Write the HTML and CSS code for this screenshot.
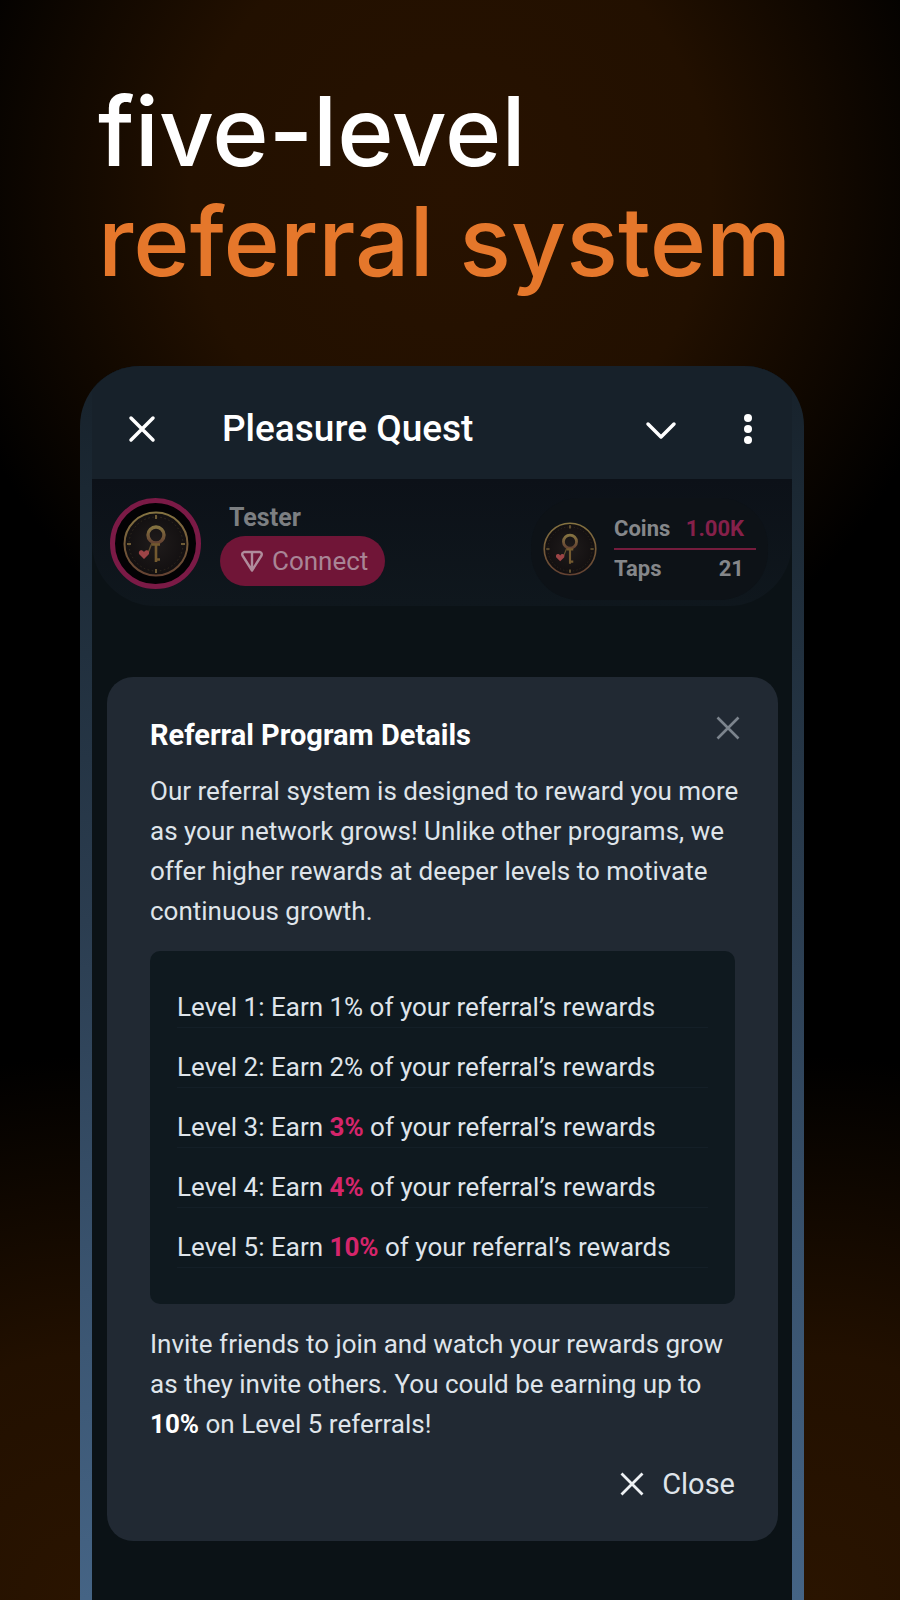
FILE: index.html
```html
<!DOCTYPE html>
<html lang="en">
<head>
<meta charset="utf-8">
<meta name="viewport" content="width=device-width, initial-scale=1">
<title>Pleasure Quest – Five-level referral system</title>
<link rel="stylesheet" href="styles.css">
</head>
<body>
<svg class="defs" aria-hidden="true">
  <defs>
    <linearGradient id="gold" x1="0" y1="0" x2="0" y2="1">
      <stop offset="0" stop-color="#857341"/>
      <stop offset="1" stop-color="#644232"/>
    </linearGradient>
    <radialGradient id="face">
      <stop offset="0" stop-color="#1f1b1b"/>
      <stop offset="1" stop-color="#120f10"/>
    </radialGradient>
    <symbol id="coin" viewBox="0 0 66 66">
      <circle cx="33" cy="33" r="31.5" fill="url(#face)" stroke="url(#gold)" stroke-width="2"/>
      <circle cx="33" cy="33" r="27" fill="none" stroke="#30291f" stroke-width="1" stroke-dasharray="1.5 2.6"/>
      <path d="M33 4v4M33 58v4M4 33h4M58 33h4" stroke="#6d5a35" stroke-width="2"/>
      <circle cx="33" cy="24" r="8" fill="none" stroke="url(#gold)" stroke-width="3.4"/>
      <path d="M33 33v18M33 48.500h4M29 33.500h8" fill="none" stroke="#73592f" stroke-width="2.6"/>
      <path d="M29 32l-4 10" stroke="#66522f" stroke-width="1.4"/>
      <path d="M21 48l-5-5c-1-4 3-5 5-2 2-3 6-2 5 2z" fill="#9c4446"/>
    </symbol>
  </defs>
</svg>
<header class="hero">
  <h1 class="hero-title">five-level<br><span class="hero-accent">referral system</span></h1>
</header>
<main class="phone">
  <div class="screen">
    <div class="topbar">
      <button class="icon-btn" aria-label="Close app">
        <svg width="28" height="28" viewBox="0 0 28 28"><path d="M3 3l22 22M25 3L3 25"/></svg>
      </button>
      <h2 class="app-title">Pleasure Quest</h2>
      <button class="icon-btn" aria-label="Minimize">
        <svg width="32" height="28" viewBox="0 0 32 28"><path d="M3 9l13 13L29 9"/></svg>
      </button>
      <button class="icon-btn" aria-label="More options">
        <svg width="12" height="32" viewBox="0 0 12 32"><g fill="#fff" stroke="none"><circle cx="6" cy="5" r="4"/><circle cx="6" cy="16" r="4"/><circle cx="6" cy="27" r="4"/></g></svg>
      </button>
    </div>
    <section class="profile">
      <div class="avatar"><svg width="66" height="66"><use href="#coin"/></svg></div>
      <div class="user">
        <span class="user-name">Tester</span>
        <button class="connect">
          <svg width="24" height="24" viewBox="0 0 24 24"><path d="M4 3h16q2.500 1 1.500 3.500L12 21.500 2.500 6.500Q1.500 4 4 3zM12 3v18"/></svg>
          Connect
        </button>
      </div>
      <div class="wallet">
        <svg width="54" height="54"><use href="#coin"/></svg>
        <dl class="stats">
          <div class="stat"><dt>Coins</dt><dd class="pink">1.00K</dd></div>
          <div class="stat"><dt>Taps</dt><dd>21</dd></div>
        </dl>
      </div>
    </section>
    <section class="dialog" role="dialog" aria-labelledby="dialog-title">
      <div class="dialog-head">
        <h3 class="dialog-title" id="dialog-title">Referral Program Details</h3>
        <button class="dismiss" aria-label="Dismiss">
          <svg width="26" height="26" viewBox="0 0 26 26"><path d="M2.500 2.500l21 21M23.500 2.500l-21 21"/></svg>
        </button>
      </div>
      <p class="copy">Our referral system is designed to reward you more as your network grows! Unlike other programs, we offer higher rewards at deeper levels to motivate continuous growth.</p>
      <ul class="levels">
        <li>Level 1: Earn 1% of your referral’s rewards</li>
        <li>Level 2: Earn 2% of your referral’s rewards</li>
        <li>Level 3: Earn <strong>3%</strong> of your referral’s rewards</li>
        <li>Level 4: Earn <strong>4%</strong> of your referral’s rewards</li>
        <li>Level 5: Earn <strong>10%</strong> of your referral’s rewards</li>
      </ul>
      <p class="copy">Invite friends to join and watch your rewards grow as they invite others. You could be earning up to <b>10%</b> on Level 5 referrals!</p>
      <button class="close">
        <svg width="26" height="26" viewBox="0 0 26 26"><path d="M2.500 2.500l21 21M23.500 2.500l-21 21"/></svg>
        Close
      </button>
    </section>
  </div>
</main>
</body>
</html>
```
FILE: styles.css
```css
* {
  box-sizing: border-box;
}

body {
  margin: 0;
  min-height: 100vh;
  display: flex;
  flex-direction: column;
  font-family: Roboto, "Liberation Sans", sans-serif;
  color: #dfe4ea;
  background:
    radial-gradient(ellipse 58% 34% at 50% 12%, #281200 0%, #221000 50%, transparent 100%),
    radial-gradient(ellipse 55% 34% at 9% 100%, #2a1400 0%, #221000 45%, transparent 100%),
    radial-gradient(ellipse 55% 34% at 91% 100%, #2a1400 0%, #221000 45%, transparent 100%),
    #000;
}

h1, h2, h3, p, ul, dl, dd {
  margin: 0;
  padding: 0;
}

button {
  padding: 0;
  border: 0;
  background: none;
  font: inherit;
  color: inherit;
  cursor: pointer;
}

svg {
  display: block;
  flex: none;
}

.defs {
  position: absolute;
  width: 0;
  height: 0;
}

.hero {
  padding: 76px 40px 70px 98px;
}

.hero-title {
  font-family: Inter, "Liberation Sans", sans-serif;
  font-size: 96px;
  line-height: 110px;
  font-weight: 500;
  color: #fff;
}

.hero-accent {
  color: #e5772b;
}

.phone {
  flex: 1;
  display: flex;
  margin: 0 96px 0 80px;
  padding: 0 12px;
  border-radius: 60px 60px 0 0;
  overflow: hidden;
  background: linear-gradient(#17212a 0, #1b2833 10%, #2b3d50 45%, #3a5470 75%, #456485 100%);
}

.screen {
  flex: 1;
  min-width: 0;
  background: #0b1216;
}

.topbar {
  display: flex;
  align-items: center;
  height: 113px;
  padding: 12px 38px 0 36px;
  background: #17212a;
}

.icon-btn svg {
  fill: none;
  stroke: #fff;
  stroke-width: 3.5;
  stroke-linecap: round;
  stroke-linejoin: round;
}

.app-title {
  flex: 1;
  margin-left: 66px;
  font-size: 37px;
  line-height: 44px;
  font-weight: 500;
  color: #fff;
}

.icon-btn + .icon-btn,
.app-title + .icon-btn + .icon-btn {
  margin-left: 65px;
}

.profile {
  display: flex;
  align-items: flex-start;
  height: 127px;
  padding: 19px 24px 0 18px;
  border-radius: 0 0 64px 64px;
  background: linear-gradient(#0c1118, #0f171d);
}

.avatar {
  display: grid;
  place-items: center;
  width: 91px;
  height: 91px;
  border: 5px solid #7b1a46;
  border-radius: 50%;
  background: #030204;
}

.user {
  flex: 1;
  margin-left: 19px;
}

.user-name {
  display: block;
  padding: 6px 0 4px 9px;
  font-size: 25px;
  line-height: 28px;
  font-weight: 700;
  color: #7c7f82;
}

.connect {
  display: flex;
  align-items: center;
  gap: 8px;
  height: 50px;
  padding: 0 17px 0 20px;
  border-radius: 25px;
  background: #701537;
  font-size: 26px;
  color: #a98596;
}

.connect svg {
  fill: none;
  stroke: #b08c9c;
  stroke-width: 2.4;
  stroke-linejoin: round;
}

.wallet {
  display: flex;
  align-items: center;
  gap: 17px;
  padding: 12px;
  border-radius: 48px;
  background: #0d1217;
}

.stats {
  width: 142px;
  font-size: 22px;
  line-height: 38px;
  font-weight: 700;
  color: #85878a;
}

.stat {
  display: flex;
  justify-content: space-between;
  padding-right: 12px;
}

.stat + .stat {
  border-top: 2px solid #751c3d;
}

.pink {
  color: #85204a;
}

.dialog {
  margin: 71px 14px 0 15px;
  padding: 38px 43px 37px;
  border-radius: 26px;
  background: #212933;
}

.dialog-head {
  display: flex;
  justify-content: space-between;
  align-items: flex-start;
  margin-bottom: 16px;
}

.dialog-title {
  font-size: 29px;
  line-height: 40px;
  font-weight: 700;
  color: #fff;
}

.dismiss {
  margin-right: -6px;
}

.dismiss svg {
  stroke: #7c848d;
  stroke-width: 2.6;
}

.copy {
  margin-right: -12px;
  font-size: 26px;
  line-height: 40px;
}

.copy b {
  color: #fff;
}

.levels {
  display: grid;
  gap: 19px;
  margin: 20px 0;
  padding: 36px 27px;
  border-radius: 10px;
  background: #0f191f;
  list-style: none;
  font-size: 26px;
  line-height: 40px;
}

.levels li {
  border-bottom: 1px solid #141f27;
}

.levels strong {
  color: #d5256b;
}

.close {
  display: flex;
  align-items: center;
  gap: 17px;
  margin: 20px 0 0 auto;
  font-size: 29px;
  line-height: 40px;
}

.close svg {
  stroke: #eef1f4;
  stroke-width: 2.8;
}
```
